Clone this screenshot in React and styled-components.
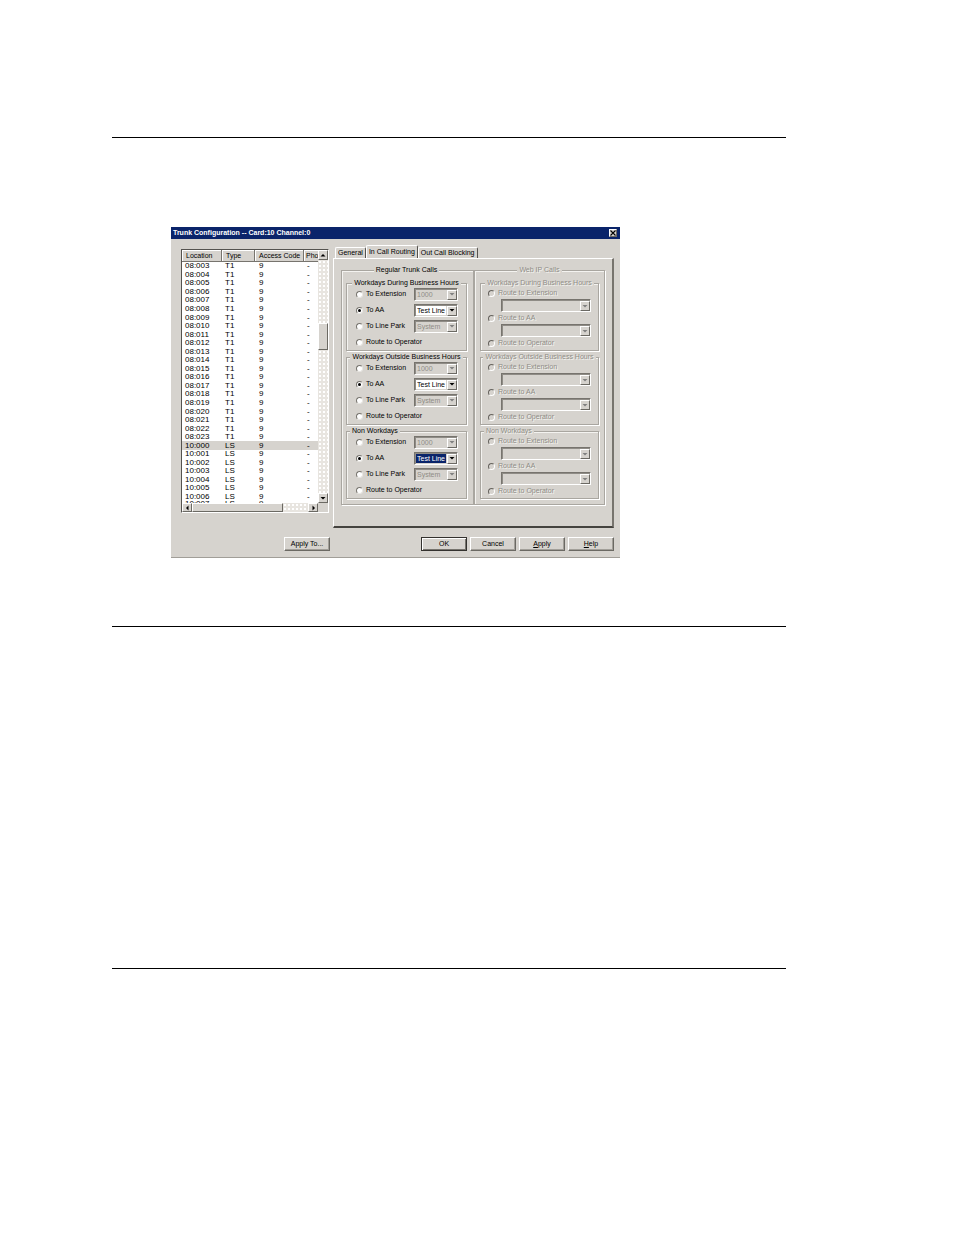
import React, { useState } from "react";
import styled, { createGlobalStyle, css } from "styled-components";

const face = "#d6d3ce";
const navy = "#0a246a";

// list rows: location, type
const trunks = [
  ...Array.from({ length: 21 }, (_, i) => ["08:" + String(i + 3).padStart(3, "0"), "T1"]),
  ...Array.from({ length: 8 }, (_, i) => ["10:" + String(i).padStart(3, "0"), "LS"]),
];

const schedules = [
  { id: "during", title: "Workdays During Business Hours", aa: "Test Line I" },
  { id: "outside", title: "Workdays Outside Business Hours", aa: "Test Line I" },
  { id: "non", title: "Non Workdays", aa: "Test Line", left: true, active: true },
];

const Arrow = ({ dir = "down", color = "#000" }) => {
  const points = {
    up: "0.5,3.5 5.5,3.5 3,1",
    down: "0.5,1 5.5,1 3,3.5",
    left: "3.5,0.5 3.5,5.5 1,3",
    right: "1.5,0.5 1.5,5.5 4,3",
  };
  const flat = dir === "up" || dir === "down";
  return (
    <svg width={flat ? 6 : 5} height={flat ? 5 : 6} aria-hidden="true">
      <polygon points={points[dir]} fill={color} />
    </svg>
  );
};

const Combo = ({ label, value = "", disabled, active }) => (
  <ComboBox>
    <ComboSelect aria-label={label} disabled={disabled} $active={active}>
      <option>{value}</option>
    </ComboSelect>
    <ComboArrow>
      <Arrow color={disabled ? "#808080" : "#000"} />
    </ComboArrow>
  </ComboBox>
);

const TrunkGroup = ({ schedule }) => {
  const [target, setTarget] = useState("To AA");
  const rows = [
    { label: "To Extension", value: "1000" },
    { label: "To AA", value: schedule.aa },
    { label: "To Line Park", value: "System" },
    { label: "Route to Operator" },
  ];

  return (
    <Group>
      <Legend $left={schedule.left}>{schedule.title}</Legend>
      <TrunkRows>
        {rows.map(({ label, value }) => (
          <TrunkRow key={label}>
            <Choice>
              <Radio
                name={schedule.id}
                checked={target === label}
                onChange={() => setTarget(label)}
              />
              {label}
            </Choice>
            {value && (
              <Combo
                label={label}
                value={value}
                disabled={target !== label}
                active={schedule.active && target === label}
              />
            )}
          </TrunkRow>
        ))}
      </TrunkRows>
    </Group>
  );
};

const WebGroup = ({ schedule }) => (
  <Group disabled>
    <Legend $left={schedule.left} $dim>{schedule.title}</Legend>
    <WebRows>
      {["Route to Extension", "Route to AA", "Route to Operator"].map((label, i) => (
        <React.Fragment key={label}>
          <Choice $dim>
            <Radio name={"web-" + schedule.id} disabled />
            {label}
          </Choice>
          {i < 2 && (
            <WebCombo>
              <Combo label={label} disabled />
            </WebCombo>
          )}
        </React.Fragment>
      ))}
    </WebRows>
  </Group>
);

const TrunkList = () => (
  <ListBox>
    <ListView>
      <Table>
        <colgroup>
          <col width="40" />
          <col width="33" />
          <col width="49" />
          <col />
        </colgroup>
        <thead>
          <tr>
            <Th>Location</Th>
            <Th>Type</Th>
            <Th>Access Code</Th>
            <Th>Pho</Th>
          </tr>
        </thead>
        <tbody>
          {trunks.map(([location, type]) => (
            <Tr key={location} $selected={location === "10:000"}>
              <td>{location}</td>
              <td>{type}</td>
              <td>9</td>
              <td>-</td>
            </Tr>
          ))}
        </tbody>
      </Table>
    </ListView>
    <VBar>
      <BarButton aria-label="Scroll up"><Arrow dir="up" /></BarButton>
      <Track $grow={64} />
      <Thumb $grow={25} />
      <Track $grow={144} />
      <BarButton aria-label="Scroll down"><Arrow dir="down" /></BarButton>
    </VBar>
    <HBar>
      <BarButton aria-label="Scroll left"><Arrow dir="left" /></BarButton>
      <Thumb $grow={92} />
      <Track $grow={26} />
      <BarButton aria-label="Scroll right"><Arrow dir="right" /></BarButton>
    </HBar>
  </ListBox>
);

const App = () => {
  const [tab, setTab] = useState("In Call Routing");

  return (
    <Page>
      <GlobalStyle />
      <Rule />
      <Dialog>
        <TitleBar>
          <Title>Trunk Configuration -- Card:10 Channel:0</Title>
          <CloseButton aria-label="Close">
            <svg width="6" height="6" aria-hidden="true">
              <path d="M0.5 0.5L5.5 5.5M5.5 0.5L0.5 5.5" stroke="#000" strokeWidth="1.1" />
            </svg>
          </CloseButton>
        </TitleBar>
        <Body>
          <TrunkList />
          <div>
            <Tabs role="tablist">
              {["General", "In Call Routing", "Out Call Blocking"].map((name) => (
                <Tab
                  key={name}
                  role="tab"
                  aria-selected={tab === name}
                  $selected={tab === name}
                  onClick={() => setTab(name)}
                >
                  {name}
                </Tab>
              ))}
            </Tabs>
            <Panel role="tabpanel">
              <Section>
                <Legend>Regular Trunk Calls</Legend>
                {schedules.map((s) => <TrunkGroup key={s.id} schedule={s} />)}
              </Section>
              <Section $second>
                <Legend $dim>Web IP Calls</Legend>
                {schedules.map((s) => <WebGroup key={s.id} schedule={s} />)}
              </Section>
            </Panel>
          </div>
        </Body>
        <Footer>
          <PushButton>Apply To...</PushButton>
          <Actions>
            <PushButton $default>OK</PushButton>
            <PushButton>Cancel</PushButton>
            <PushButton><u>A</u>pply</PushButton>
            <PushButton><u>H</u>elp</PushButton>
          </Actions>
        </Footer>
      </Dialog>
      <Rule />
      <Blank />
      <Rule />
    </Page>
  );
};

const GlobalStyle = createGlobalStyle`
  * {
    box-sizing: border-box;
  }

  body {
    margin: 0;
    background: #fff;
  }

  button, select, input, table, fieldset {
    font: inherit;
    color: inherit;
    margin: 0;
    padding: 0;
  }

  svg {
    display: block;
  }
`;

const raised = css`
  background: ${face};
  border: 1px solid;
  border-color: #fff #6b6963 #6b6963 #fff;
`;

const dim = css`
  color: #8f8c86;
  text-shadow: 1px 1px 0 #f4f3f0;
`;

const Page = styled.main`
  min-height: 100vh;
  padding: 137px 168px 0 112px;
  font-family: "Liberation Sans", Arial, sans-serif;
  font-size: 7px;
  line-height: 10px;
  color: #000;
`;

const Rule = styled.hr`
  height: 1px;
  margin: 0;
  border: 0;
  background: #000;
`;

const Blank = styled.div`
  height: 341px;
`;

const Dialog = styled.section`
  margin: 89px 166px 68px 59px;
  min-width: 449px;
  background: ${face};
  border-bottom: 1px solid #a19e98;
`;

const TitleBar = styled.header`
  display: flex;
  align-items: center;
  justify-content: space-between;
  height: 12px;
  padding: 0 3px 0 2px;
  background: ${navy};
  color: #fff;
`;

const Title = styled.h1`
  margin: 0;
  font-size: 7px;
  font-weight: bold;
`;

const CloseButton = styled.button`
  ${raised}
  display: grid;
  place-items: center;
  width: 8px;
  height: 8px;
`;

const Body = styled.div`
  display: grid;
  grid-template-columns: 148px 1fr;
  gap: 4px;
  padding: 6px 6px 0 10px;
`;

const ListBox = styled.div`
  display: grid;
  grid-template-columns: 1fr 10px;
  grid-template-rows: 253px 9px;
  align-self: start;
  margin-top: 4px;
  background: ${face};
  border: 1px solid;
  border-color: #55534f #fff #fff #55534f;
`;

const ListView = styled.div`
  overflow: hidden;
  background: #fff;
`;

const Table = styled.table`
  width: 100%;
  height: 258px;
  table-layout: fixed;
  border-collapse: collapse;
  line-height: 8px;
`;

const Th = styled.th`
  height: 12px;
  padding: 0 0 0 4px;
  overflow: hidden;
  text-align: left;
  font-weight: normal;
  white-space: nowrap;
  background: ${face};
  box-shadow: inset -1px -1px 0 #77746e, inset 1px 1px 0 #fff;

  &:last-child {
    padding-left: 2px;
    box-shadow: inset 0 -1px 0 #77746e, inset 1px 1px 0 #fff;
  }
`;

const Tr = styled.tr`
  background: ${({ $selected }) => ($selected ? face : "#fff")};

  td {
    padding: 0 0 0 3px;
    font-size: 8px;
  }

  td:nth-child(3) {
    padding-left: 4px;
  }

  &:last-child td {
    line-height: 6px;
    vertical-align: top;
  }
`;

const VBar = styled.div`
  display: flex;
  flex-direction: column;
`;

const HBar = styled.div`
  display: flex;
`;

const BarButton = styled.button`
  ${raised}
  display: grid;
  place-items: center;
  flex: 0 0 10px;
  min-width: 9px;
  min-height: 9px;
`;

const Track = styled.div`
  flex: ${({ $grow }) => $grow} 1 0;
  background: radial-gradient(circle, #fff 1px, #e8e5e0 1px) 0 0 / 4px 4px;
`;

const Thumb = styled.div`
  ${raised}
  flex: ${({ $grow }) => $grow} 1 0;
`;

const Tabs = styled.div`
  display: flex;
  align-items: flex-end;
  height: 13px;
  padding-left: 2px;
`;

const Tab = styled.button`
  height: ${({ $selected }) => ($selected ? 13 : 11)}px;
  padding: 0 2px;
  white-space: nowrap;
  background: ${face};
  border: 1px solid;
  border-color: #fff #55534f transparent #fff;
  border-bottom: 0;
  border-radius: 2px 2px 0 0;
`;

const Panel = styled.div`
  display: grid;
  grid-template-columns: 133px 1fr;
  padding: 6px 7px 21px;
  border: 1px solid;
  border-color: #fff #77746e #45433f #fff;
  border-right-width: 2px;
  border-bottom-width: 2px;
`;

const Frame = styled.fieldset`
  min-width: 0;
  border: 1px solid #a9a6a0;
  box-shadow: 1px 1px 0 #fff, inset 1px 1px 0 #f4f3f0;
`;

const Section = styled(Frame)`
  display: flex;
  flex-direction: column;
  gap: 1px;
  padding: ${({ $second }) => ($second ? "3px 5px 5px" : "3px 6px 5px 4px")};
`;

const Group = styled(Frame)`
  height: 73px;
`;

const Legend = styled.legend`
  margin: ${({ $left }) => ($left ? "0 0 0 3px" : "0 auto")};
  padding: 0 2px;
  white-space: nowrap;
  background: ${face};
  ${({ $dim }) => $dim && dim}
`;

const TrunkRows = styled.div`
  margin-top: -2px;
  padding: 0 8px 0 9px;
`;

const TrunkRow = styled.div`
  display: grid;
  grid-template-columns: 1fr 44px;
  align-items: center;
  height: 16px;
`;

const WebRows = styled.div`
  padding: 0 7px 0 7px;
`;

const WebCombo = styled.div`
  padding: 1px 0 1px 13px;
`;

const Choice = styled.label`
  display: flex;
  align-items: center;
  gap: 3px;
  white-space: nowrap;
  ${({ $dim }) => $dim && dim}
`;

const Radio = styled.input.attrs({ type: "radio" })`
  appearance: none;
  display: grid;
  place-items: center;
  flex: none;
  width: 7px;
  height: 7px;
  background: #fff;
  border: 1px solid;
  border-color: #77746e #e9e7e3 #e9e7e3 #77746e;
  border-radius: 50%;

  &:checked::after {
    content: "";
    width: 3px;
    height: 3px;
    border-radius: 50%;
    background: #000;
  }

  &:disabled {
    background: ${face};
    border-color: #66635e #fff #fff #66635e;
  }
`;

const ComboBox = styled.div`
  position: relative;
  height: 13px;
  border: 1px solid;
  border-color: #77746e #fff #fff #77746e;
  box-shadow: inset 1px 1px 0 #8f8c86;
`;

const ComboSelect = styled.select`
  appearance: none;
  display: block;
  width: calc(100% - 12px);
  height: 9px;
  margin: 1px 0 0 1px;
  padding-left: 1px;
  line-height: 9px;
  border: 0;
  border-radius: 0;
  outline: 0;
  overflow: hidden;
  text-overflow: clip;
  background: ${({ $active }) => ($active ? navy : "#fff")};
  color: ${({ $active }) => ($active ? "#fff" : "#000")};

  &:disabled {
    opacity: 1;
    background: ${face};
    color: #8f8c86;
  }
`;

const ComboArrow = styled.span`
  ${raised}
  position: absolute;
  top: 1px;
  right: 0;
  display: grid;
  place-items: center;
  width: 10px;
  height: 10px;
  pointer-events: none;
`;

const Footer = styled.footer`
  display: flex;
  justify-content: space-between;
  padding: 9px 6px 6px 113px;
`;

const Actions = styled.div`
  display: flex;
  gap: 3px;
`;

const PushButton = styled.button`
  ${raised}
  width: 46px;
  height: 14px;
  box-shadow: inset -1px -1px 0 #a29f99;
  ${({ $default }) => $default && css`
    border-color: #33312e;
    box-shadow: inset 1px 1px 0 #fff, inset -1px -1px 0 #77746e;
  `}
`;

export default App;
